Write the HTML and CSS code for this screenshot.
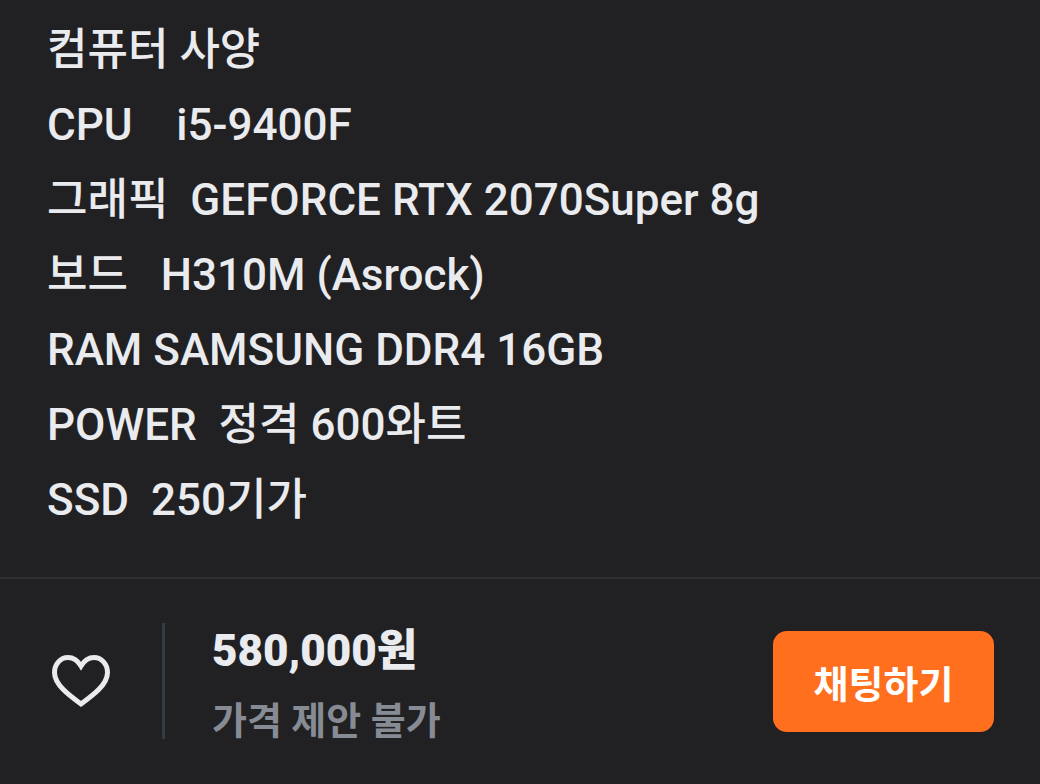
FILE: index.html
```
<!DOCTYPE html>
<html lang="ko">
<head>
    <meta charset="utf-8">
    <meta name="viewport" content="width=device-width, initial-scale=1">
    <link rel="stylesheet" href="styles.css">
    <title>컴퓨터 사양</title>
</head>
<body>
<main class="description">
    <p>컴퓨터 사양</p>
    <p>CPU    i5-9400F</p>
    <p>그래픽  GEFORCE RTX 2070Super 8g</p>
    <p>보드   H310M (Asrock)</p>
    <p>RAM SAMSUNG DDR4 16GB</p>
    <p>POWER  정격 600와트</p>
    <p>SSD  250기가</p>
</main>
<footer class="bar">
    <button type="button" class="like" aria-label="관심">
        <svg width="60" height="54" viewBox="0 0 60 54" fill="none" stroke="currentColor" stroke-width="5">
            <path d="M30 50 C19 42 3.500 31 3.500 18.500 C3.500 10 9.500 3.500 17 3.500 C23 3.500 27 7 30 12 C33 7 37 3.500 43 3.500 C50.500 3.500 56.500 10 56.500 18.500 C56.500 31 41 42 30 50 Z"/>
        </svg>
    </button>
    <div class="price">
        <strong class="amount">580,000원</strong>
        <span class="offer">가격 제안 불가</span>
    </div>
    <button type="button" class="chat">채팅하기</button>
</footer>
</body>
</html>
```
FILE: styles.css
```
body {
    margin: 0;
    min-height: 100vh;
    display: flex;
    flex-direction: column;
    background: #212123;
    color: #eaebee;
    font-family: Roboto, "Noto Sans CJK KR", sans-serif;
}

.description {
    flex: 1;
    padding: 13px 47px 39px;
    font-size: 44px;
    font-weight: 500;
    line-height: 75px;
}

.description p {
    margin: 0;
    white-space: pre-wrap;
}

.bar {
    display: flex;
    align-items: center;
    padding: 44px 46px 45px 51px;
    border-top: 2px solid #2e2f33;
}

.like {
    display: flex;
    margin-right: 51px;
    padding: 0;
    border: 0;
    background: none;
    color: #eaebee;
}

.price {
    flex: 1;
    display: flex;
    flex-direction: column;
    gap: 24px;
    padding-left: 47px;
    border-left: 3px solid #363a42;
    font-weight: bold;
}

.amount {
    font-size: 44px;
    line-height: 56px;
}

.offer {
    color: #868b94;
    font-size: 38px;
    line-height: 36px;
}

.chat {
    width: 221px;
    height: 101px;
    border: 0;
    border-radius: 14px;
    background: #ff6f1e;
    color: #fff;
    font: bold 38px Roboto, "Noto Sans CJK KR", sans-serif;
}
```
